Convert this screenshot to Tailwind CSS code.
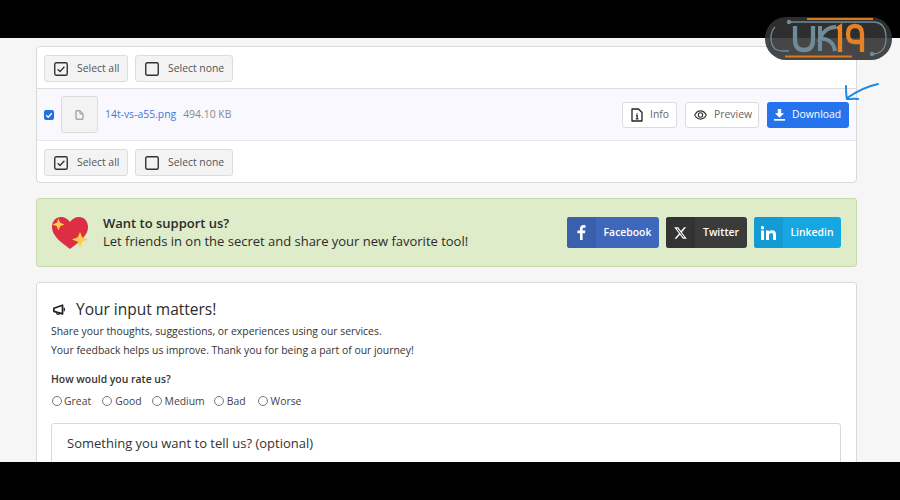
<!DOCTYPE html>
<html>
<head>
<meta charset="utf-8">
<script src="https://cdn.jsdelivr.net/npm/@tailwindcss/browser@4"></script>
</head>
<body class="m-0 bg-black">
<div class="relative w-[900px] h-[500px] overflow-hidden bg-black font-['Open_Sans','Noto_Sans',sans-serif]">
  <div class="mt-[38px] h-[424px] overflow-hidden bg-[#f6f6f6] pl-[36px] pr-[43px] pt-[8px]">
    <!-- file card -->
    <div class="h-[137px] rounded-[4px] border border-[#d9d9d9] bg-white flex flex-col">
      <div class="h-[42px] flex items-center gap-[7px] pl-[7px] pt-[2px] border-b border-[#dcdcdc]">
        <button class="h-[27px] w-[84px] flex items-center pl-[9px] gap-[9px] rounded-[3px] border border-[#dcdcdc] bg-[#f3f3f3] text-[10.4px] text-[#555]">
          <svg width="14" height="14" viewBox="0 0 14 14" fill="none"><rect x="0.75" y="0.75" width="12.5" height="12.5" rx="1.5" stroke="#333" stroke-width="1.4"/><path d="M3.7 7.2l2.3 2.3 4.4-4.8" stroke="#333" stroke-width="1.3"/></svg>
          Select all
        </button>
        <button class="h-[27px] w-[98px] flex items-center pl-[9px] gap-[9px] rounded-[3px] border border-[#dcdcdc] bg-[#f3f3f3] text-[10.4px] text-[#555]">
          <svg width="14" height="14" viewBox="0 0 14 14" fill="none"><rect x="0.75" y="0.75" width="12.5" height="12.5" rx="1.5" stroke="#333" stroke-width="1.4"/></svg>
          Select none
        </button>
      </div>
      <div class="h-[52px] flex items-center bg-[#f8f8fe] border-b border-[#e6e9f4] pl-[7px] pr-[7px]">
        <span class="w-[10px] h-[10px] rounded-[2px] bg-[#1f6fe5] flex items-center justify-center">
          <svg width="8" height="8" viewBox="0 0 8 8" fill="none"><path d="M1.2 4.2l2 2 3.6-4" stroke="#fff" stroke-width="1.3"/></svg>
        </span>
        <span class="ml-[7px] w-[37px] h-[37px] rounded-[3px] border border-[#dcdcdc] bg-[#f3f3f3] flex items-center justify-center">
          <svg width="9" height="10" viewBox="0 0 9 10" fill="none"><path d="M1 .8h4.200L8 3.600v5.600H1z" stroke="#888" stroke-width="1"/><path d="M5 1v2.800h3" stroke="#888" stroke-width=".9"/></svg>
        </span>
        <span class="ml-[7px] pt-[1px] text-[10.4px] text-[#3d78d8]">14t-vs-a55.png</span>
        <span class="ml-[7px] pt-[1px] text-[10.4px] text-[#888]">494.10 KB</span>
        <div class="ml-auto flex items-center gap-[8px]">
          <button class="h-[26px] w-[55px] flex items-center pl-[8px] pt-[1px] gap-[7px] rounded-[3px] border border-[#dcdcdc] bg-white text-[10.4px] text-[#666]">
            <svg width="12" height="14" viewBox="0 0 12 14" fill="none"><path d="M1 1h6.500L11 4.500V13H1z" stroke="#222" stroke-width="1.300" stroke-linejoin="round"/><path d="M6 5.200v1.200M5 7.600h1.200v3.200M4.800 10.900h2.600" stroke="#222" stroke-width="1.200"/></svg>
            Info
          </button>
          <button class="h-[26px] w-[74px] flex items-center pl-[8px] pt-[1px] gap-[7px] rounded-[3px] border border-[#dcdcdc] bg-white text-[10.4px] text-[#666]">
            <svg width="13" height="10" viewBox="0 0 13 10" fill="none"><path d="M.7 5C2.200 2.200 4.200.9 6.500.9s4.300 1.300 5.800 4.100C10.800 7.800 8.800 9.100 6.500 9.100S2.200 7.800.7 5z" stroke="#333" stroke-width="1.100"/><circle cx="6.500" cy="5" r="2.200" stroke="#333" stroke-width="1.100"/></svg>
            Preview
          </button>
          <button class="h-[26px] w-[82px] flex items-center pl-[7px] pt-[1px] gap-[7px] rounded-[3px] bg-[#2673ee] text-[10.4px] text-white">
            <svg width="11" height="12" viewBox="0 0 11 12" fill="#fff"><path d="M3.800 0h3.400v4.300h2.800L5.500 8.800 1 4.300h2.800z"/><rect x="0" y="10" width="11" height="1.700"/></svg>
            Download
          </button>
        </div>
      </div>
      <div class="flex-1 flex items-center gap-[7px] pl-[7px] pt-[2px]">
        <button class="h-[27px] w-[84px] flex items-center pl-[9px] gap-[9px] rounded-[3px] border border-[#dcdcdc] bg-[#f3f3f3] text-[10.4px] text-[#555]">
          <svg width="14" height="14" viewBox="0 0 14 14" fill="none"><rect x="0.75" y="0.75" width="12.5" height="12.5" rx="1.5" stroke="#333" stroke-width="1.4"/><path d="M3.7 7.2l2.3 2.3 4.4-4.8" stroke="#333" stroke-width="1.3"/></svg>
          Select all
        </button>
        <button class="h-[27px] w-[98px] flex items-center pl-[9px] gap-[9px] rounded-[3px] border border-[#dcdcdc] bg-[#f3f3f3] text-[10.4px] text-[#555]">
          <svg width="14" height="14" viewBox="0 0 14 14" fill="none"><rect x="0.75" y="0.75" width="12.5" height="12.5" rx="1.5" stroke="#333" stroke-width="1.4"/></svg>
          Select none
        </button>
      </div>
    </div>
    <!-- support banner -->
    <div class="mt-[15px] h-[69px] rounded-[3px] border border-[#c5d9ae] bg-[#deecc9] flex items-center pl-[14px] pr-[15px]">
      <svg width="38" height="34" viewBox="0 0 38 34">
        <path d="M19 33C8 25 1 19 1 11 1 5 5 1 10 1c4 0 7 2 9 5 2-3 5-5 9-5 5 0 9 4 9 10 0 8-7 14-18 22z" fill="#dd2e44"/>
        <path d="M7.500 2.500l1.700 4.300 4.300 1.700-4.300 1.700-1.700 4.300-1.700-4.300L1.500 8.500l4.300-1.700z" fill="#ffcc4d"/>
        <path d="M29 16l2.200 5.300 5.800 2.200-5.800 2.200L29 32l-2.200-6.300-5.800-2.200 5.800-2.200z" fill="#ffcc4d"/>
      </svg>
      <div class="ml-[14px] text-[#2b2b2b] text-[13px] tracking-[-0.01px]">
        <div class="font-semibold leading-[18px] -mt-[1px]">Want to support us?</div>
        <div class="leading-[18px]">Let friends in on the secret and share your new favorite tool!</div>
      </div>
      <div class="ml-auto flex gap-[7px]">
        <div class="h-[31px] w-[92px] rounded-[3px] overflow-hidden flex bg-[#3f68bd] text-white text-[10.4px] font-semibold">
          <span class="w-[29px] bg-[#3a5fad] flex items-center justify-center"><svg width="9" height="15" viewBox="0 0 9 15" fill="#fff"><path d="M3 15V8.300H.4V5.500H3V3.500C3 1.200 4.400 0 6.400 0c.9 0 1.800.1 2.100.2v2.500H7c-1.100 0-1.400.6-1.400 1.300v1.500h2.800l-.4 2.800H5.600V15z"/></svg></span>
          <span class="flex-1 flex items-center justify-center">Facebook</span>
        </div>
        <div class="h-[31px] w-[81px] rounded-[3px] overflow-hidden flex bg-[#3b3b3b] text-white text-[10.4px] font-semibold">
          <span class="w-[29px] bg-[#333] flex items-center justify-center"><svg width="15" height="14" viewBox="0 0 24 24" fill="#fff"><path d="M18.244 2.250h3.308l-7.227 8.260 8.502 11.240H16.170l-5.214-6.817L4.990 21.750H1.680l7.730-8.835L1.254 2.250H8.080l4.713 6.231zm-1.161 17.520h1.833L7.084 4.126H5.117z"/></svg></span>
          <span class="flex-1 flex items-center justify-center">Twitter</span>
        </div>
        <div class="h-[31px] w-[87px] rounded-[3px] overflow-hidden flex bg-[#16a6e2] text-white text-[10.4px] font-semibold">
          <span class="w-[29px] bg-[#149bd4] flex items-center justify-center"><svg width="15" height="14" viewBox="0 0 15 14" fill="#fff"><rect x="0" y="4.500" width="3" height="9.500"/><circle cx="1.500" cy="1.700" r="1.700"/><path d="M5 4.500h2.900v1.300C8.400 5 9.500 4.300 11 4.300c3 0 4 1.800 4 4.600V14h-3V9.500c0-1.300-.3-2.500-1.700-2.500S8 8.100 8 9.500V14H5z"/></svg></span>
          <span class="flex-1 flex items-center justify-center">Linkedin</span>
        </div>
      </div>
    </div>
    <!-- feedback -->
    <div class="mt-[15px] h-[200px] rounded-[3px] border border-[#d9d9d9] bg-white pl-[14px] pr-[15px] pt-[15px]">
      <div class="flex items-center h-[24px] text-[15.500px] text-[#2b2b2b]">
        <svg class="ml-[2px]" width="13" height="12" viewBox="0 0 15 13" fill="none"><path d="M1 4.500L11 1v10L1 8z" stroke="#222" stroke-width="2" stroke-linejoin="round"/><path d="M13 4v4" stroke="#222" stroke-width="1.500"/><path d="M4 9l.6 2.500h2.500L6.500 9.500" stroke="#222" stroke-width="1.200"/></svg>
        <span class="ml-[10px]">Your input matters!</span>
      </div>
      <div class="text-[10.400px] leading-[19px] text-[#333]">
        <div>Share your thoughts, suggestions, or experiences using our services.</div>
        <div>Your feedback helps us improve. Thank you for being a part of our journey!</div>
      </div>
      <div class="mt-[10px] text-[10.400px] font-semibold leading-[18px] text-[#333]">How would you rate us?</div>
      <div class="mt-[4px] flex items-center text-[10.400px] leading-[18px] text-[#444]">
        <span class="ml-[1px] w-[10px] h-[10px] rounded-full border border-[#777] bg-white"></span><span class="ml-[2px]">Great</span>
        <span class="ml-[11px] w-[10px] h-[10px] rounded-full border border-[#777] bg-white"></span><span class="ml-[3px]">Good</span>
        <span class="ml-[10px] w-[10px] h-[10px] rounded-full border border-[#777] bg-white"></span><span class="ml-[3px]">Medium</span>
        <span class="ml-[9px] w-[10px] h-[10px] rounded-full border border-[#777] bg-white"></span><span class="ml-[3px]">Bad</span>
        <span class="ml-[12px] w-[10px] h-[10px] rounded-full border border-[#777] bg-white"></span><span class="ml-[3px]">Worse</span>
      </div>
      <div class="mt-[13px] h-[60px] rounded-[3px] border border-[#d9d9d9] pl-[15px] pt-[9px] text-[13px] leading-[20px] text-[#333]">Something you want to tell us? (optional)</div>
    </div>
  </div>
  <!-- logo overlay -->
  <svg class="absolute left-[764px] top-[16px]" width="128" height="44" viewBox="0 0 128 44" fill="none">
    <rect x="1" y="1" width="127" height="43" rx="21" fill="#333" fill-opacity=".9"/>
    <path d="M43 3h66" stroke="#d97a1e" stroke-width="2"/>
    <path d="M21 40.500h67" stroke="#d97a1e" stroke-width="2"/>
    <path d="M25 6h84q13 0 13 16t-14 16M11 11q-4 4-4 11t4 11q3 2 8 2h6" stroke="#6f8a98" stroke-width="1.300"/>
    <circle cx="25" cy="6" r="2.200" fill="#6f8a98"/><circle cx="108" cy="38" r="2.200" fill="#6f8a98"/>
    <path d="M31 10v14q0 10 9 10t9-10V10" stroke="#6f8a98" stroke-width="4.300"/>
    <path d="M56 10v25M72 11c-9 0-14 6-16 12 7-1 14 3 15 12" stroke="#6f8a98" stroke-width="4"/>
    <path d="M73 13l3-2v25" stroke="#e58225" stroke-width="4.300"/>
    <path d="M98 36V18q0-8-7-8t-7 8 7 8h7" stroke="#e58225" stroke-width="4.300"/>
  </svg>
  <!-- hand-drawn arrow -->
  <svg class="absolute left-[842px] top-[80px]" width="40" height="24" viewBox="0 0 40 24" fill="none">
    <path d="M36 4C26 6 14 12 5 18M4 6c0 4 0 9 1 13 3 0 8-.5 11 0" stroke="#1f8ae0" stroke-width="2" stroke-linecap="round"/>
  </svg>
</div>
</body>
</html>
